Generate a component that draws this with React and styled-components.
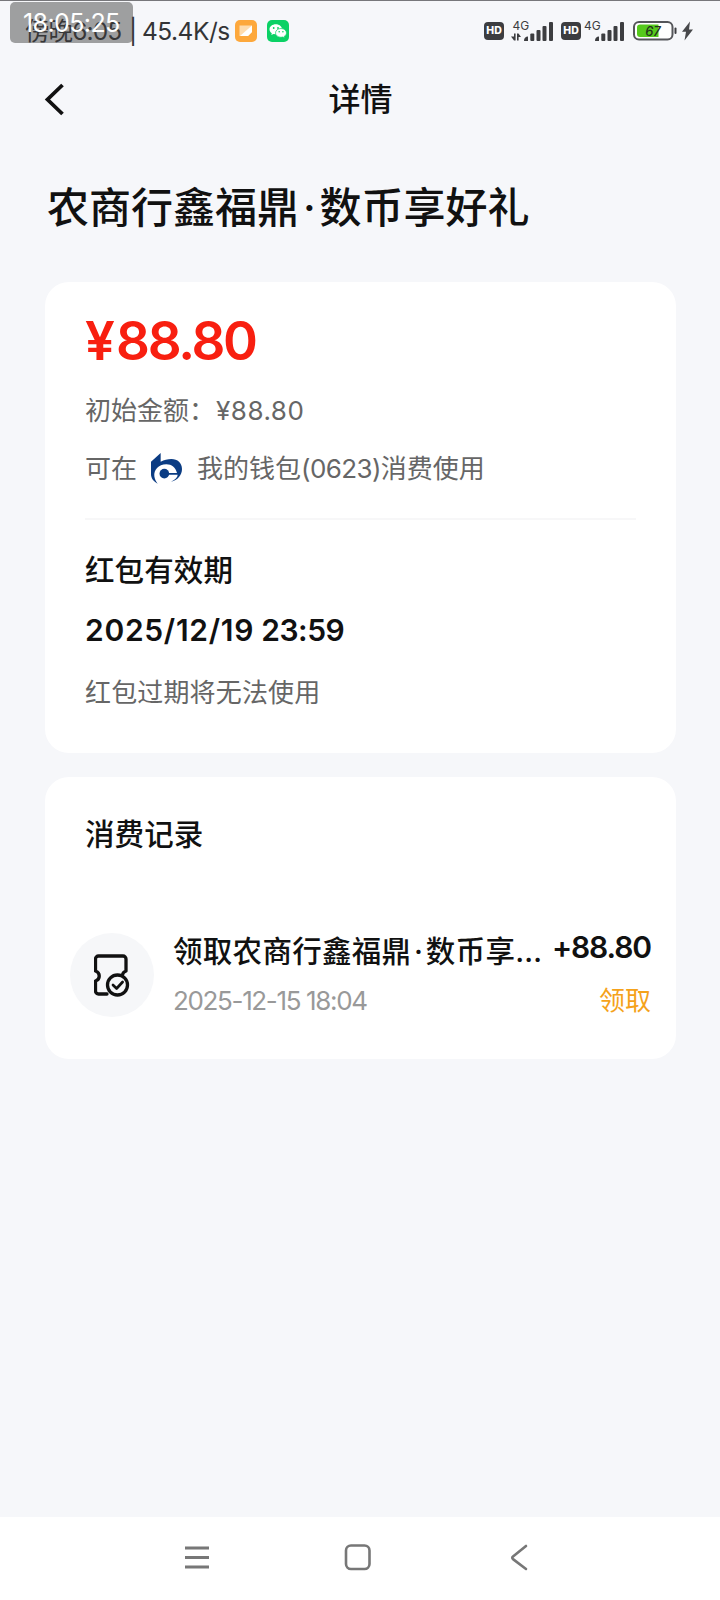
import React from "react";
import styled, { createGlobalStyle } from "styled-components";

const GlobalStyle = createGlobalStyle`
  * { box-sizing: border-box; }
  body { margin: 0; background: #f6f7fa; }
`;

const Screen = styled.div`
  width: 720px;
  height: 1600px;
  display: flex;
  flex-direction: column;
  background: #f6f7fa;
  color: #111;
  font-family: Inter, "Noto Sans CJK SC", sans-serif;
  white-space: nowrap;
  overflow: hidden;
`;

const StatusBar = styled.div`
  position: relative;
  height: 60px;
  flex: none;
  display: flex;
  justify-content: space-between;
  align-items: flex-start;
  border-top: 1px solid #77777b;
  padding: 14px 27px 0 25px;
`;

const StatusGroup = styled.div`
  display: flex;
  align-items: center;
  height: 32px;
`;

const StatusText = styled.span`
  font-size: 24.5px;
  line-height: 32px;
  color: #333436;
  width: ${(p) => p.$w}px;
  letter-spacing: ${(p) => p.$ls || 0}px;
`;

const Clock = styled.div`
  position: absolute;
  left: 10px;
  top: 1px;
  width: 123px;
  height: 41px;
  border-radius: 5px;
  background: rgba(60, 60, 60, 0.47);
  color: #fff;
  font-size: 25px;
  line-height: 42px;
  padding-left: 13px;
  letter-spacing: -0.6px;
`;

const StatusIcon = styled.svg`
  display: block;
  flex: none;
  overflow: visible;
  margin-left: ${(p) => p.$ml || 0}px;
`;

const HdBadge = styled.span`
  width: 20px;
  height: 18px;
  margin-left: ${(p) => p.$ml || 0}px;
  border-radius: 4px;
  background: #3c3d40;
  color: #fff;
  font-size: 10.5px;
  font-weight: 800;
  line-height: 18px;
  text-align: center;
`;

const Header = styled.header`
  height: 78px;
  flex: none;
  display: grid;
  grid-template-columns: 100px 1fr 100px;
  align-items: center;
`;

const BackIcon = styled.svg`
  display: block;
  margin: 0 0 0 42px;
`;

const HeaderTitle = styled.div`
  text-align: center;
  font-size: 32px;
  line-height: 40px;
  font-weight: 500;
  padding: 2px 0 0 1px;
`;

const PageTitle = styled.h1`
  margin: 40px 0 0 47px;
  font-size: 42px;
  line-height: 60px;
  font-weight: 500;
`;

const MidDot = styled.span`
  display: inline-block;
  width: 0.49em;
  text-align: center;
`;

const Card = styled.section`
  width: 631px;
  height: ${(p) => p.$h}px;
  flex: none;
  margin: ${(p) => p.$mt}px 0 0 45px;
  border-radius: 24px;
  background: #fff;
`;

const CardBody = styled.div`
  display: flex;
  flex-direction: column;
  padding: ${(p) => p.$pt}px 40px 0;
`;

const Amount = styled.div`
  font-size: 53px;
  line-height: 60px;
  font-weight: 600;
  color: #f81f10;
  letter-spacing: -2.3px;
`;

const Yuan = styled.span`
  letter-spacing: 1.2px;
`;

const Note = styled.div`
  display: flex;
  align-items: center;
  height: 36px;
  margin-top: ${(p) => p.$mt}px;
  font-size: 26px;
  line-height: 36px;
  color: #666;
  letter-spacing: ${(p) => p.$ls || 0}px;
`;

const Digits = styled.span`
  margin-left: ${(p) => p.$ml || 0}px;
  letter-spacing: ${(p) => p.$ls}px;
`;

const BankLogo = styled.svg`
  display: block;
  margin: 0 14px 0 14px;
`;

const Divider = styled.div`
  height: 2px;
  margin-top: 31px;
  background: #f7f7f8;
`;

const SectionTitle = styled.h2`
  margin: ${(p) => p.$mt}px 0 0;
  font-size: 29.5px;
  line-height: 40px;
  font-weight: 500;
  letter-spacing: 0.1px;
`;

const Expiry = styled.div`
  margin-top: 20px;
  font-size: 30px;
  line-height: 40px;
  font-weight: 600;
  letter-spacing: 0.7px;
  word-spacing: -1px;
`;

const ExpiryTime = styled.span`
  letter-spacing: -0.5px;
`;

const Record = styled.div`
  display: flex;
  margin-top: 78px;
  padding: 0 25px;
`;

const RecordIcon = styled.div`
  width: 84px;
  height: 84px;
  flex: none;
  margin-top: 1px;
  border-radius: 50%;
  background: #f6f7f9;
  display: flex;
  align-items: center;
  justify-content: center;
`;

const RecordMain = styled.div`
  width: 372px;
  flex: none;
  margin-left: 19px;
`;

const RecordTitle = styled.div`
  margin-top: -1px;
  overflow: hidden;
  text-overflow: ellipsis;
  font-size: 29.5px;
  line-height: 40px;
  font-weight: 500;
  letter-spacing: 0.3px;
`;

const RecordTime = styled.div`
  margin-top: 12px;
  font-size: 26px;
  line-height: 36px;
  color: #999;
  letter-spacing: -1.35px;
`;

const RecordSide = styled.div`
  flex: 1;
  display: flex;
  flex-direction: column;
  align-items: flex-end;
`;

const RecordAmount = styled.div`
  margin-top: -5px;
  font-size: 30px;
  line-height: 40px;
  font-weight: 600;
  letter-spacing: -1.1px;
`;

const RecordType = styled.div`
  margin-top: 16px;
  font-size: 26px;
  line-height: 36px;
  color: #f5a21b;
`;

const NavBar = styled.nav`
  height: 83px;
  flex: none;
  margin-top: auto;
  display: flex;
  justify-content: center;
  padding: 24px 4px 0 0;
  gap: 129px;
  background: #fff;
`;

const NavIcon = styled.svg`
  display: block;
`;

function Signal({ data, ml }) {
  return (
    <StatusIcon $ml={ml} width="42" height="22" viewBox="0 0 42 22" fill="#3c3d40">
      <text x={data ? 1.5 : 0} y="9.500" fontSize="12" fontFamily="Inter, sans-serif">4G</text>
      {data && <path d="M0 16.500h3V13.500h1.600V20.500H3zM6 13.500h1.500l2.500 3.500H7.600v3.500H6z" />}
      <g transform={data ? "translate(13 0)" : "translate(11 0)"}>
        <path d="M0 21c0-3 1.500-4.500 4-4.500V21z" />
        <rect x="6.300" y="13.500" width="4" height="7.500" rx="1" />
        <rect x="12.500" y="10" width="4" height="11" rx="1" />
        <rect x="18.500" y="6" width="4" height="15" rx="1" />
        <rect x="25" y="2" width="4" height="19" rx="1" />
      </g>
    </StatusIcon>
  );
}

export default function App() {
  return (
    <Screen>
      <GlobalStyle />
      <StatusBar>
        <StatusGroup>
          <StatusText $w={104} $ls={-0.9}>傍晚6:05</StatusText>
          <StatusText $w={13}>|</StatusText>
          <StatusText $w={93} $ls={-0.5}>45.4K/s</StatusText>
          <StatusIcon width="22" height="22" viewBox="0 0 22 22">
            <rect width="22" height="22" rx="5" fill="#fda83c" />
            <path d="M4.500 5.500h12.500v6.500l-4 4H4.500z" fill="#fedcae" />
            <path d="M17 5.500v6.500l-4 4H5z" fill="#fff" />
          </StatusIcon>
          <StatusIcon $ml={10} width="22" height="22" viewBox="0 0 22 22">
            <rect width="22" height="22" rx="5" fill="#0bd165" />
            <path d="M8.800 4.300c-3.500 0-6.300 2.200-6.300 5 0 1.600.9 3 2.300 3.900l-.5 1.900 2.200-1.100 2.300.3 6.200-5c0-2.800-2.700-5-6.200-5z" fill="#fff" />
            <path d="M14 8.500c-3 0-5.500 1.900-5.500 4.400s2.500 4.400 5.500 4.400l1.900-.3 1.800 1-.4-1.700c1.300-.8 2.200-2 2.200-3.400 0-2.500-2.500-4.400-5.500-4.400z" fill="#fff" stroke="#0bd165" strokeWidth=".7" />
            <g fill="#0bd165">
              <circle cx="6.700" cy="8" r=".9" /><circle cx="11" cy="8" r=".9" />
              <circle cx="12.200" cy="11.700" r=".8" /><circle cx="15.900" cy="11.700" r=".8" />
            </g>
          </StatusIcon>
        </StatusGroup>
        <StatusGroup>
          <HdBadge>HD</HdBadge>
          <Signal data ml={7} />
          <HdBadge $ml={8}>HD</HdBadge>
          <Signal ml={3} />
          <StatusIcon $ml={7} width="45" height="20" viewBox="0 0 45 20">
            <rect x="1" y="1" width="38.500" height="17.500" rx="5" fill="#fff" stroke="#55565a" strokeWidth="2" />
            <path d="M7 3.500h18.500V16H7a3 3 0 0 1-3-3V6.500a3 3 0 0 1 3-3z" fill="#55c91c" />
            <rect x="41.500" y="6.500" width="2" height="6.500" rx="1" fill="#3c3d40" />
            <text x="20" y="14.500" textAnchor="middle" fontSize="13" fontWeight="500" fontStyle="italic" fontFamily="Inter, sans-serif" fill="#23331d">67</text>
          </StatusIcon>
          <StatusIcon $ml={4} width="11" height="20" viewBox="0 0 11 20">
            <path d="M8 .5 0 10.800h4L2.500 19.500 11 8.500H7z" fill="#47484b" />
          </StatusIcon>
        </StatusGroup>
        <Clock>18:05:25</Clock>
      </StatusBar>

      <Header>
        <BackIcon width="24" height="34" viewBox="0 0 24 34" fill="none" stroke="#111" strokeWidth="3.800">
          <path d="M20.500 3 5.500 17.500 20.500 32" />
        </BackIcon>
        <HeaderTitle>详情</HeaderTitle>
      </Header>

      <PageTitle>农商行鑫福鼎<MidDot>·</MidDot>数币享好礼</PageTitle>

      <Card $h={471} $mt={44}>
        <CardBody $pt={29}>
          <Amount><Yuan>¥</Yuan>88.80</Amount>
          <Note $mt={22}>初始金额：<Digits $ls={0.5} $ml={1}>¥88.80</Digits></Note>
          <Note $mt={22}>
            可在
            <BankLogo width="32" height="32" viewBox="0 0 96 96" fill="#0b3c83">
              <path d="M0 26 29 0v26C39 21 50 18 61 18c19 0 32 12 32 30 0 18-13 34-33 38 14-7 20-14 20-21H40v-5h38C74 44 62 34 46 34 22 34 8 52 10 70c1 8 5 16 10 22C8 86 0 76 0 64z" />
              <circle cx="40" cy="62" r="14.500" />
            </BankLogo>
            <span>我的钱包<Digits $ls={-0.6}>(0623)</Digits>消费使用</span>
          </Note>
          <Divider />
          <SectionTitle $mt={30}>红包有效期</SectionTitle>
          <Expiry>2025/12/19 <ExpiryTime>23:59</ExpiryTime></Expiry>
          <Note $mt={25} $ls={0.15}>红包过期将无法使用</Note>
        </CardBody>
      </Card>

      <Card $h={282} $mt={24}>
        <CardBody $pt={37}>
          <SectionTitle $mt={0}>消费记录</SectionTitle>
        </CardBody>
        <Record>
          <RecordIcon>
            <svg width="36" height="43" viewBox="0 0 36 43" fill="none" stroke="#111" strokeWidth="3.300" strokeLinejoin="round" strokeLinecap="round">
              <path d="M13 40H4.500a3 3 0 0 1-3-3V27c5-1.500 5-8.500 0-10V5a3 3 0 0 1 3-3H29a3 3 0 0 1 3 3v12c-2 .8-3.200 2-3.500 3.800" />
              <circle cx="23.500" cy="31" r="10" />
              <path d="m19 31 3.600 3.500 6-6.500" strokeWidth="2.700" />
            </svg>
          </RecordIcon>
          <RecordMain>
            <RecordTitle>领取农商行鑫福鼎<MidDot>·</MidDot>数币享好礼</RecordTitle>
            <RecordTime>2025-12-15 18:04</RecordTime>
          </RecordMain>
          <RecordSide>
            <RecordAmount>+88.80</RecordAmount>
            <RecordType>领取</RecordType>
          </RecordSide>
        </Record>
      </Card>

      <NavBar>
        <NavIcon width="32" height="32" viewBox="0 0 32 32" stroke="#777" strokeWidth="2.800">
          <path d="M4 7h24M4 16.500h24M4 26h24" />
        </NavIcon>
        <NavIcon width="32" height="32" viewBox="0 0 32 32" fill="none" stroke="#777" strokeWidth="2.600">
          <rect x="4" y="4.500" width="23.500" height="23.500" rx="5" />
        </NavIcon>
        <NavIcon width="32" height="32" viewBox="0 0 32 32" fill="none" stroke="#777" strokeWidth="2.600" strokeLinecap="round" strokeLinejoin="round">
          <path d="M23 5 10 15.500q-1.500 1.300 0 2.600L23 28" />
        </NavIcon>
      </NavBar>
    </Screen>
  );
}
